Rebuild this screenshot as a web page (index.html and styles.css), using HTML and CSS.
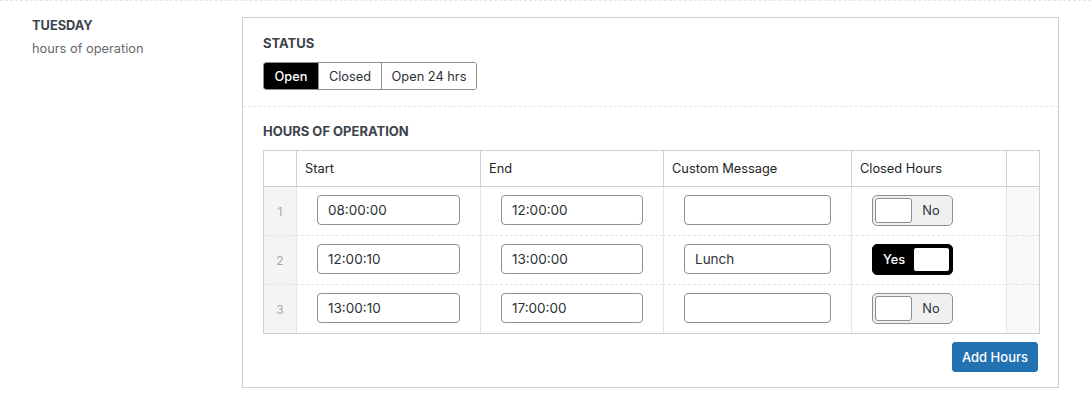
FILE: index.html
```html
<!DOCTYPE html>
<html lang="en">
<head>
<meta charset="utf-8">
<title>Tuesday hours</title>
<link rel="stylesheet" href="styles.css">
</head>
<body>
<div class="field">
  <div class="field-label">
    <div class="label-title">TUESDAY</div>
    <div class="label-desc">hours of operation</div>
  </div>
  <div class="field-box">
    <div class="sub sub-status">
      <div class="sub-label">STATUS</div>
      <div class="btn-group">
        <span class="seg seg-active">Open</span>
        <span class="seg">Closed</span>
        <span class="seg">Open 24 hrs</span>
      </div>
    </div>
    <div class="sub sub-hours">
      <div class="sub-label">HOURS OF OPERATION</div>
      <table class="rep">
        <thead>
          <tr>
            <th class="c-order"></th>
            <th class="c-start">Start</th>
            <th class="c-end">End</th>
            <th class="c-msg">Custom Message</th>
            <th class="c-closed">Closed Hours</th>
            <th class="c-rm"></th>
          </tr>
        </thead>
        <tbody>
          <tr>
            <td class="order">1</td>
            <td><input class="txt" type="text" value="08:00:00"></td>
            <td><input class="txt" type="text" value="12:00:00"></td>
            <td><input class="txt" type="text" value=""></td>
            <td><div class="toggle toggle-off"><span class="knob"></span><span class="tlabel">No</span></div></td>
            <td class="rm"></td>
          </tr>
          <tr>
            <td class="order">2</td>
            <td><input class="txt" type="text" value="12:00:10"></td>
            <td><input class="txt" type="text" value="13:00:00"></td>
            <td><input class="txt" type="text" value="Lunch"></td>
            <td><div class="toggle toggle-on"><span class="tlabel">Yes</span><span class="knob"></span></div></td>
            <td class="rm"></td>
          </tr>
          <tr>
            <td class="order">3</td>
            <td><input class="txt" type="text" value="13:00:10"></td>
            <td><input class="txt" type="text" value="17:00:00"></td>
            <td><input class="txt" type="text" value=""></td>
            <td><div class="toggle toggle-off"><span class="knob"></span><span class="tlabel">No</span></div></td>
            <td class="rm"></td>
          </tr>
        </tbody>
      </table>
      <div class="rep-footer">
        <button class="btn-primary" type="button">Add Hours</button>
      </div>
    </div>
  </div>
</div>
</body>
</html>
```

FILE: styles.css
```css
* { box-sizing: border-box; }

body {
  margin: 0;
  background: #fff;
  font-family: Inter, "Liberation Sans", Arial, sans-serif;
  font-size: 13px;
  color: #1d2327;
}

.field {
  display: flex;
  align-items: flex-start;
  border-top: 1px dashed #e2e4e7;
  padding-top: 16px;
}

.field-label {
  width: 242px;
  padding-left: 32px;
  flex: none;
}

.label-title {
  font-size: 12.8px;
  font-weight: 700;
  line-height: 18px;
  color: #3c434a;
}

.label-desc {
  margin-top: 5px;
  font-size: 12.8px;
  line-height: 18px;
  color: #646970;
}

.field-box {
  width: 817px;
  flex: none;
  border: 1px solid #ccd0d4;
}

.sub {
  padding: 16px 18px 16px 20px;
}

.sub-status {
  border-bottom: 1px dashed #e2e4e7;
}

.sub-hours {
  padding-top: 15px;
  padding-bottom: 15px;
}

.sub-label {
  font-size: 13px;
  font-weight: 700;
  line-height: 18px;
  color: #3c434a;
  margin-bottom: 10px;
}

.btn-group {
  display: inline-flex;
  height: 28px;
  border: 1px solid #8c8f94;
  border-radius: 3px;
  overflow: hidden;
}

.seg {
  display: flex;
  align-items: center;
  justify-content: center;
  color: #2c3338;
  font-size: 12.8px;
  background: #fff;
}

.seg:nth-child(1) { width: 54px; }
.seg:nth-child(2) { width: 63px; }
.seg:nth-child(3) { width: 95px; }

.seg + .seg {
  border-left: 1px solid #8c8f94;
}

.seg-active {
  background: #000;
  color: #fff;
  font-weight: 500;
}

/* repeater table */
.rep {
  table-layout: fixed;
  width: 777px;
  border-collapse: separate;
  border-spacing: 0;
  border: 1px solid #ccd0d4;
}

.rep th {
  height: 36px;
  padding: 0 8px;
  text-align: left;
  font-weight: normal;
  font-size: 12.8px;
  color: #1d2327;
  border-bottom: 1px solid #ccd0d4;
  vertical-align: middle;
}

.rep th + th {
  border-left: 1px solid #ccd0d4;
}

.c-order { width: 32px; }
.c-start { width: 184px; }
.c-end { width: 183px; }
.c-msg { width: 188px; }
.c-closed { width: 155px; }
.c-rm { width: 33px; }

.rep td {
  height: 48px;
  padding: 8px 20px 0;
  vertical-align: top;
}

.rep td + td {
  border-left: 1px solid #e6e7e9;
}

.rep tbody tr + tr td {
  height: 49px;
  border-top: 1px dashed #e2e4e7;
}

.rep td.order {
  padding: 0;
  background: #f4f4f4;
  color: #a7aaad;
  font-size: 12px;
  text-align: center;
  vertical-align: middle;
}

.rep td.rm {
  padding: 0;
  background: #f9f9f9;
}

.txt {
  display: block;
  width: 100%;
  height: 30px;
  margin: 0;
  padding: 0 10px;
  border: 1px solid #8c8f94;
  border-radius: 4px;
  background: #fff;
  font-family: Inter, "Liberation Sans", Arial, sans-serif;
  font-size: 13.5px;
  color: #2c3338;
  outline: none;
}

.rep td:nth-child(4) .txt {
  width: 147px;
}

.toggle {
  display: flex;
  align-items: stretch;
  width: 81px;
  height: 31px;
  padding: 2px;
  border: 1px solid #8c8f94;
  border-radius: 5px;
  background: #f0f0f1;
}

.knob {
  width: 37px;
  flex: none;
  background: #fff;
  border: 1px solid #8c8f94;
  border-radius: 3px;
}

.tlabel {
  flex: 1;
  display: flex;
  align-items: center;
  justify-content: center;
  font-size: 12.8px;
  color: #2c3338;
}

.toggle-on {
  background: #000;
  border-color: #000;
}

.toggle-on .knob {
  border-color: #000;
}

.toggle-on .tlabel {
  color: #fff;
  font-weight: 500;
}

.rep-footer {
  display: flex;
  justify-content: flex-end;
  margin-top: 8px;
  padding-right: 2px;
}

.btn-primary {
  height: 30px;
  width: 86px;
  padding: 0;
  border: 1px solid #2271b1;
  border-radius: 3px;
  background: #2271b1;
  color: #fff;
  font-family: Inter, "Liberation Sans", Arial, sans-serif;
  font-size: 13px;
  font-weight: 500;
  cursor: pointer;
}
```
